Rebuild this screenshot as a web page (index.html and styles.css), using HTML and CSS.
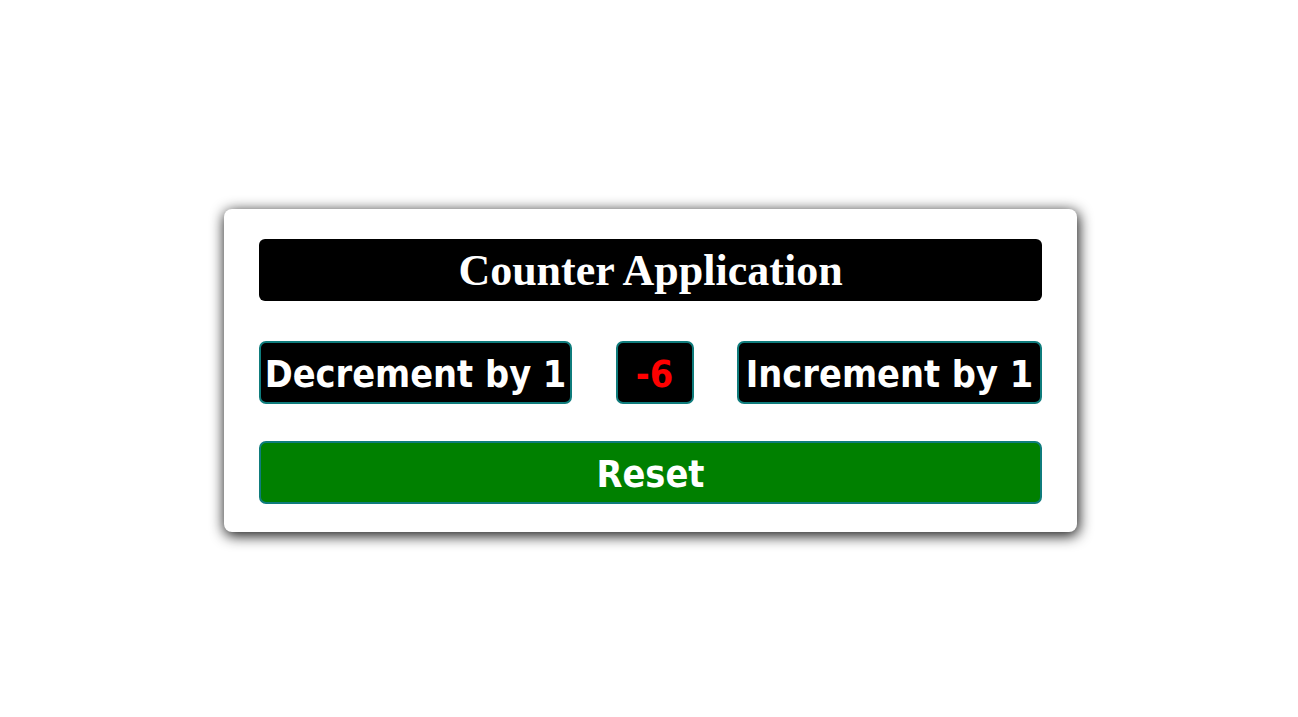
FILE: index.html
```html
<!DOCTYPE html>
<html>
<head>
<meta charset="utf-8">
<link rel="stylesheet" href="styles.css">
</head>
<body>
<main class="page">
  <section class="card">
    <h1 class="title">Counter Application</h1>
    <div class="controls">
      <button class="btn btn-dec">Decrement by 1</button>
      <div class="count">-6</div>
      <button class="btn btn-inc">Increment by 1</button>
    </div>
    <button class="btn reset">Reset</button>
  </section>
</main>
</body>
</html>
```
FILE: styles.css
```css
html, body {
  margin: 0;
  padding: 0;
  background: #fff;
}
.page {
  min-height: 100vh;
  box-sizing: border-box;
  padding: 24px 0 0 3px;
  display: flex;
  align-items: center;
  justify-content: center;
}
.card {
  width: 853px;
  height: 323px;
  box-sizing: border-box;
  padding: 30px 35px 28px 35px;
  background: #fff;
  border-radius: 8px;
  box-shadow: 1px 3px 14px 1px rgba(0,0,0,0.9);
  display: flex;
  flex-direction: column;
}
.title {
  margin: 0 0 40px 0;
  height: 62px;
  flex: none;
  background: #000;
  color: #fff;
  border-radius: 6px;
  font-family: "Liberation Serif", "Times New Roman", serif;
  font-weight: bold;
  font-size: 44px;
  display: flex;
  align-items: center;
  justify-content: center;
}
.controls {
  margin: 0 0 37px 0;
  display: flex;
  justify-content: space-between;
  align-items: center;
}
.btn, .count {
  height: 63px;
  flex: none;
  box-sizing: border-box;
  border: 2px solid #0f7c7c;
  border-radius: 7px;
  background: #000;
  color: #fff;
  font-family: "DejaVu Sans Condensed", "DejaVu Sans", Verdana, sans-serif;
  font-stretch: condensed;
  font-weight: bold;
  font-size: 37.5px;
  display: flex;
  align-items: center;
  justify-content: center;
  padding: 3px 2px 0 2px;
}
.btn-dec { width: 313px; }
.btn-inc { width: 305px; }
.count {
  width: 78px;
  color: #ff0000;
}
.reset {
  width: 100%;
  background: #008000;
}
```
